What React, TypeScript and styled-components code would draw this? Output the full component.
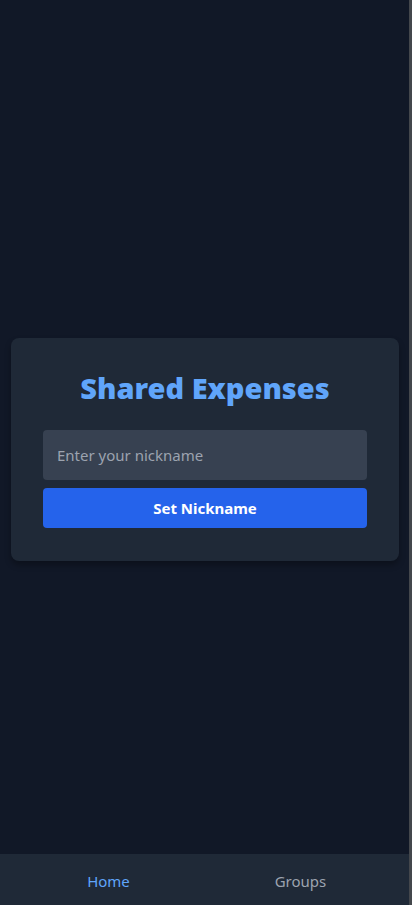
import React from "react";
import styled, { createGlobalStyle } from "styled-components";

const Global = createGlobalStyle`
  body {
    margin: 0;
    background: #111827;
    font-family: "Noto Sans", "Open Sans", sans-serif;
  }
  * { box-sizing: border-box; }
`;

const Page = styled.div`
  min-height: 905px;
  width: 409px;
  display: flex;
  flex-direction: column;
  background: #111827;
`;

const ScrollTrack = styled.div`
  position: fixed;
  top: 0;
  right: 0;
  width: 3px;
  height: 100vh;
  background: #44474c;
`;

const Main = styled.main`
  flex: 1;
  display: flex;
  align-items: center;
  justify-content: center;
  padding: 44px 10px 0 11px;
`;

const Card = styled.div`
  width: 100%;
  background: #1f2937;
  border-radius: 8px;
  padding: 32px 32px 33px;
  display: flex;
  flex-direction: column;
  box-shadow: 0 4px 6px rgba(0, 0, 0, 0.3);
`;

const Title = styled.h1`
  margin: 0 0 24px;
  text-align: center;
  color: #60a5fa;
  font-size: 29px;
  line-height: 36px;
  font-weight: 900;
`;

const Input = styled.input`
  height: 50px;
  border: none;
  border-radius: 4px;
  background: #374151;
  color: #e5e7eb;
  padding: 0 14px;
  font-size: 15px;
  font-family: inherit;
  outline: none;
  &::placeholder { color: #9ca3af; }
`;

const Button = styled.button`
  margin-top: 8px;
  height: 40px;
  border: none;
  border-radius: 4px;
  background: #2563eb;
  color: #ffffff;
  font-family: inherit;
  font-size: 15px;
  font-weight: 700;
`;

const Nav = styled.nav`
  height: 51px;
  background: #1f2937;
  display: flex;
  justify-content: center;
  align-items: center;
  padding-top: 3px;
`;

const NavInner = styled.div`
  width: 384px;
  display: flex;
`;

const NavItem = styled.a<{ $active?: boolean }>`
  flex: 1;
  color: ${(p) => (p.$active ? "#60a5fa" : "#9ca3af")};
  font-size: 15px;
  text-decoration: none;
  text-align: center;
`;

export default function App() {
  return (
    <>
      <Global />
      <Page>
        <Main>
          <Card>
            <Title>Shared Expenses</Title>
            <Input placeholder="Enter your nickname" />
            <Button>Set Nickname</Button>
          </Card>
        </Main>
        <Nav>
          <NavInner>
            <NavItem $active>Home</NavItem>
            <NavItem>Groups</NavItem>
          </NavInner>
        </Nav>
      </Page>
      <ScrollTrack />
    </>
  );
}
